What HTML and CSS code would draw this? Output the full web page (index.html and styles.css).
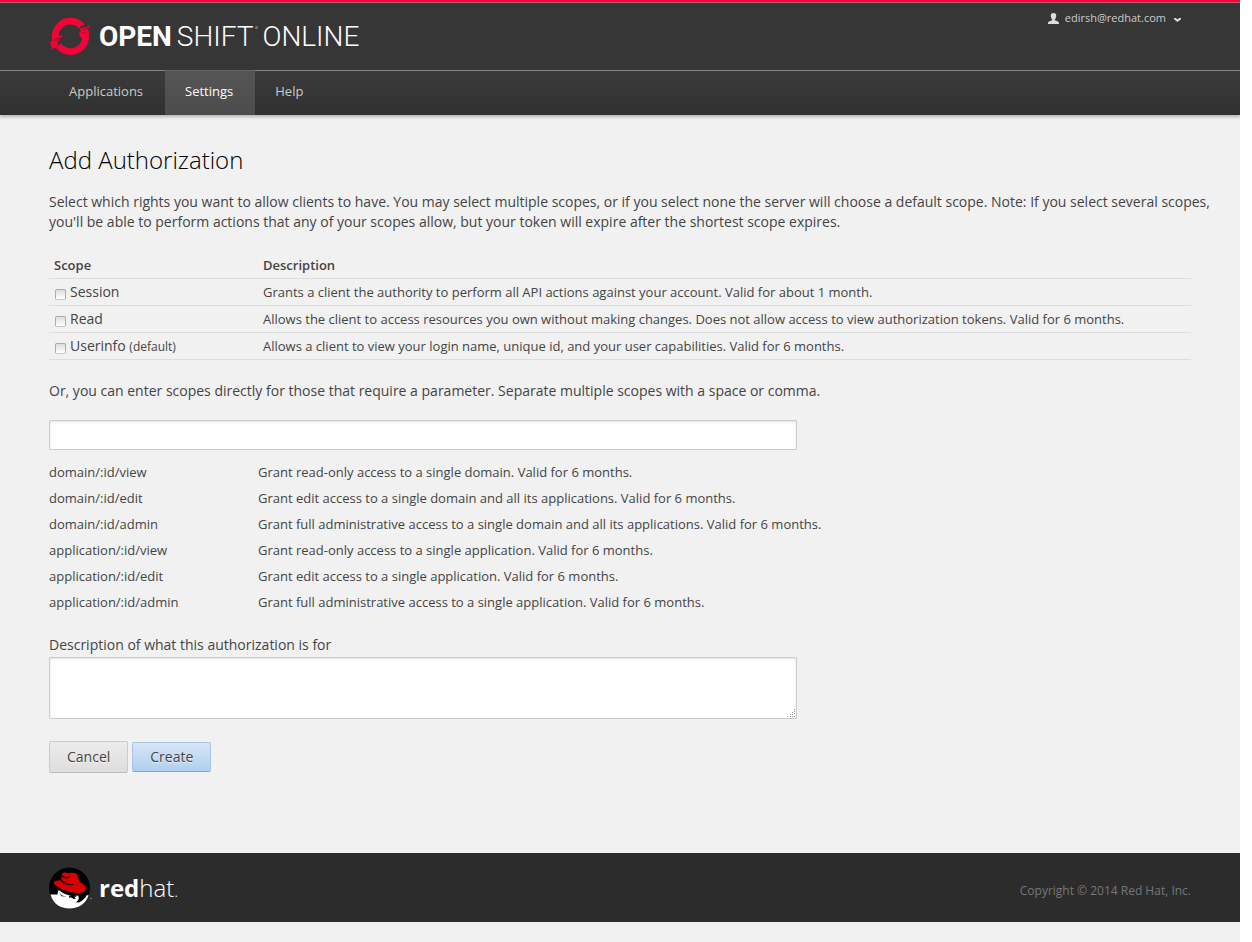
FILE: index.html
```html
<!DOCTYPE html>
<html lang="en">
<head>
<meta charset="utf-8">
<title>Add Authorization | OpenShift Online</title>
<link rel="stylesheet" href="styles.css">
</head>
<body>
<div class="page">
  <header class="masthead">
    <div class="brand-bar container">
      <a class="brand" href="#">
        <svg class="brand-mark" viewBox="0 0 42 39" aria-hidden="true">
          <circle cx="21.500" cy="19.400" r="15.200" fill="none" stroke="#f40436" stroke-width="6.800"/>
          <path fill="#363636" d="M31 9.500 42 5v3l-9 5.500zM2 25l10-5 1 4-4 6-7 3z"/>
          <path fill="#f40436" d="m32 12.500 3-3 .5 1.500L41 8v3l-9.500 4.500zM30 15.500l6.500-2.500 4.300 1.500L37 21.500l-5.500-1zM3.500 20.700l10.200-2.700-1 2.600-8.400 3.600zM1 25l7-2.700 4 .5-3.500 2.800 1 4.200L3 32z"/>
          <path fill="#b3082c" d="m35.200 11.800 5.600-2.700v1.700l-6.300 2.400zM5 21.800l7.700-2-.6 1.300-7.400 3zM31.500 16.500l5-2.300-.7 1.500zM7 24l4.800-1-2.800 2.200z"/>
        </svg>
        <span class="wordmark"><b>OPEN</b><span class="shift">SHIFT</span><i class="dot"></i><span class="online">ONLINE</span></span>
      </a>
      <button class="account" type="button">
        <svg class="user-icon" viewBox="0 0 11 11" aria-hidden="true"><path fill="#ddd" d="M5.500 0C7.400 0 8.300 1.200 8.200 3c-.1 1.500-.6 2.600-1.300 3.300v1L10 8.600c.7.300 1 .8 1 2.400H0c0-1.600.3-2.100 1-2.400l3.100-1.300v-1C3.400 5.600 2.900 4.500 2.800 3 2.700 1.200 3.600 0 5.500 0z"/></svg>
        <span>edirsh@redhat.com</span>
        <svg class="caret" viewBox="0 0 7 4" aria-hidden="true"><path fill="#ddd" d="M0 0h1.500l2 1.300L5.500 0H7v1.200L3.500 4 0 1.200z"/></svg>
      </button>
    </div>
    <nav class="nav">
      <div class="nav-list container">
        <a class="nav-link" href="#">Applications</a>
        <a class="nav-link active" href="#">Settings</a>
        <a class="nav-link" href="#">Help</a>
      </div>
    </nav>
  </header>
  <main class="container content">
    <h1>Add Authorization</h1>
    <p class="intro">Select which rights you want to allow clients to have. You may select multiple scopes, or if you select none the server will choose a default scope. Note: If you select several scopes, you'll be able to perform actions that any of your scopes allow, but your token will expire after the shortest scope expires.</p>
    <form>
      <table class="scopes">
        <thead><tr><th class="scope-col">Scope</th><th>Description</th></tr></thead>
        <tbody>
          <tr><td><label class="check"><input type="checkbox"><span>Session</span></label></td><td>Grants a client the authority to perform all API actions against your account. Valid for about 1 month.</td></tr>
          <tr><td><label class="check"><input type="checkbox"><span>Read</span></label></td><td>Allows the client to access resources you own without making changes. Does not allow access to view authorization tokens. Valid for 6 months.</td></tr>
          <tr><td><label class="check"><input type="checkbox"><span>Userinfo <small>(default)</small></span></label></td><td>Allows a client to view your login name, unique id, and your user capabilities. Valid for 6 months.</td></tr>
        </tbody>
      </table>
      <label class="direct-label" for="direct">Or, you can enter scopes directly for those that require a parameter. Separate multiple scopes with a space or comma.</label>
      <input class="field" id="direct" type="text">
      <dl class="params">
        <dt>domain/:id/view</dt><dd>Grant read-only access to a single domain. Valid for 6 months.</dd>
        <dt>domain/:id/edit</dt><dd>Grant edit access to a single domain and all its applications. Valid for 6 months.</dd>
        <dt>domain/:id/admin</dt><dd>Grant full administrative access to a single domain and all its applications. Valid for 6 months.</dd>
        <dt>application/:id/view</dt><dd>Grant read-only access to a single application. Valid for 6 months.</dd>
        <dt>application/:id/edit</dt><dd>Grant edit access to a single application. Valid for 6 months.</dd>
        <dt>application/:id/admin</dt><dd>Grant full administrative access to a single application. Valid for 6 months.</dd>
      </dl>
      <label class="note-label" for="note">Description of what this authorization is for</label>
      <textarea class="field note" id="note"></textarea>
      <div class="actions">
        <button class="btn" type="button">Cancel</button>
        <button class="btn primary" type="submit">Create</button>
      </div>
    </form>
  </main>
  <footer class="footer">
    <div class="footer-row container">
      <a class="redhat" href="#">
        <svg class="hat" viewBox="0 0 43 42" aria-hidden="true">
          <circle cx="20.500" cy="21" r="20.500" fill="#000"/>
          <path fill="#fff" d="M1.500 27.500h7c.2-1.800.5-3.300 1.300-4.500 2.500 2.500 7 5 12 5.700 3 .5 5.800.3 7.500-.2l.5 2.500c-.2 1.800-1.500 4-3.500 4.300l3.800.2c4-2 6.500-4.500 7.500-7.200h2C37 36.500 30 41.500 20.500 41.500S4 36.500 1.500 27.500z"/>
          <path fill="#000" d="m20.500 28.600 7.500.8-2.500 1.200 1.500 1-2.300.5-2.500-1.600h-2.400zM10 25l3 3.500 4.500 1-5-.3z"/>
          <path fill="#d90000" d="M12.500 13.500C12.500 9 13 5.800 15 5.500c2-.4 3.500 1 5.500.6 2.500-.5 6-.8 7.500 1.500 1.200 2 1.700 4.600 2.500 7.400 3.500 1.200 6.700 4 6 7.500-.7 3.300-5.500 4-11 3.200C17 24.500 6.500 20 5 16.500c-1-2.500 3-3.500 7.500-3z"/>
          <path fill="none" stroke="#000" stroke-width="1.300" d="M12.500 13.500c3 3.500 8 4.500 12 3.800M13.500 9c2.500 2.500 5 2 7 .8"/>
          <circle cx="42" cy="31.500" r=".8" fill="#888"/>
        </svg>
        <span class="redhat-name"><b>red</b>hat<span class="tm">.</span></span>
      </a>
      <span class="copyright">Copyright © 2014 Red Hat, Inc.</span>
    </div>
  </footer>
</div>
</body>
</html>
```

FILE: styles.css
```css
* { box-sizing: border-box; }
html { background: #fff; }
body {
  margin: 0 12px 0 0;
  font: 14px/20px "Open Sans", "Noto Sans", sans-serif;
  color: #444;
}
a { color: inherit; text-decoration: none; }
.page { min-height: 100vh; background: #f1f1f1; }
.container { padding-left: 49px; padding-right: 49px; }

.masthead {
  background: #363636;
  border-top: 2px solid #f40436;
  box-shadow: 0 2px 3px rgba(0, 0, 0, .25);
}
.brand-bar {
  display: flex;
  justify-content: space-between;
  align-items: flex-start;
  height: 68px;
  border-top: 1px solid #c8566e;
}
.brand { display: flex; align-items: center; padding-top: 14px; }
.brand-mark { width: 42px; height: 39px; margin-right: 8px; }
.wordmark {
  display: flex;
  align-items: center;
  font: 300 28px/38px Roboto, sans-serif;
  color: #fff;
}
.wordmark b { font-weight: 700; }
.shift, .online { font-weight: 300; }
.shift { margin-left: 5px; }
.dot { width: 3px; height: 3px; margin: 0 5px 18px 1px; border-radius: 50%; background: #777; }
.account {
  display: flex;
  align-items: center;
  gap: 6px;
  margin: 7px 10px 0 0;
  padding: 0;
  border: 0;
  background: none;
  color: #ccc;
  font: 11px/16px "Open Sans", sans-serif;
}
.user-icon { width: 11px; height: 11px; margin-top: 1px; }
.caret { width: 7px; height: 4px; margin: 3px 0 0 2px; }

.nav {
  background: linear-gradient(#3b3b3b, #303030);
  border-top: 1px solid #858585;
}
.nav-list { display: flex; }
.nav-link {
  height: 44px;
  padding: 0 22px 0 20px;
  font-size: 13px;
  line-height: 41px;
  color: #ccc;
}
.nav-link.active {
  background: linear-gradient(#555, #4c4c4c);
  color: #fff;
  box-shadow: 0 -1px 0 #626262;
}

.content { padding-top: 29px; padding-bottom: 80px; }
h1 {
  margin: 0 0 17px;
  font-size: 24px;
  font-weight: 300;
  line-height: 31px;
  color: #000;
}
.intro { margin: 0 -28px 20px 0; }
.scopes { width: 100%; border-collapse: collapse; font-size: 13px; }
.scopes th, .scopes td {
  padding: 3px 5px;
  border-bottom: 1px solid #ddd;
  text-align: left;
  vertical-align: top;
}
.scopes th { font-weight: 600; }
.scope-col { width: 209px; }
.check { display: flex; align-items: center; gap: 4px; height: 20px; font-size: 14px; line-height: 22px; }
.check small { font-size: 12px; }
.check input {
  appearance: none;
  width: 11px;
  height: 11px;
  margin: 4px 0 0 1px;
  border: 1px solid #aaada5;
  border-bottom-color: #c8cbc4;
  border-radius: 2px;
  background: linear-gradient(#deded9, #fff);
}
.direct-label { display: block; margin: 21px 0 19px; }
.field {
  display: block;
  width: 748px;
  max-width: 100%;
  height: 30px;
  padding: 4px;
  border: 1px solid #ccc;
  border-radius: 1px;
  background: #fff;
  box-shadow: inset 0 1px 2px rgba(0, 0, 0, .12);
  font: inherit;
}
.params {
  display: grid;
  grid-template-columns: 209px 1fr;
  row-gap: 6px;
  margin: 12px 0 23px;
  font-size: 13px;
}
.params dd { margin: 0; }
.note-label { display: block; margin-bottom: 2px; }
.note { height: 62px; resize: both; }
.note::-webkit-resizer {
  background: url("data:image/svg+xml,%3Csvg xmlns='http://www.w3.org/2000/svg' width='10' height='10'%3E%3Cpath fill='%23999' d='M8 1h1v1H8zM8 3h1v1H8zM6 4h1v1H6zM8 5h1v1H8zM6 6h1v1H6zM4 6h1v1H4zM8 8h1v1H8zM6 8h1v1H6zM4 8h1v1H4zM1 8h1v1H1z'/%3E%3C/svg%3E") no-repeat right bottom;
}
.actions { display: flex; align-items: center; gap: 4px; margin-top: 22px; }
.btn {
  height: 32px;
  padding: 0 17px;
  border: 1px solid #ccc;
  border-bottom-color: #bbb;
  border-radius: 2px;
  background: linear-gradient(#ebebeb, #dedede);
  color: #444;
  font: inherit;
  text-shadow: 0 1px 1px rgba(255, 255, 255, .75);
}
.btn.primary {
  height: 30px;
  border-color: #a9c3e4;
  border-bottom-color: #8ba4c4;
  background: linear-gradient(#d8e5f4, #aed0f0);
}

.footer { background: #2c2c2c; }
.footer-row { display: flex; justify-content: space-between; align-items: center; height: 69px; }
.redhat { display: flex; align-items: center; }
.hat { width: 43px; height: 42px; margin-right: 7px; }
.redhat-name { padding-top: 4px; font-size: 24px; font-weight: 300; line-height: 38px; color: #fff; }
.redhat-name b { font-weight: 700; }
.tm { font-size: 16px; }
.copyright { padding-top: 6px; font-size: 12px; color: #777; }
```
